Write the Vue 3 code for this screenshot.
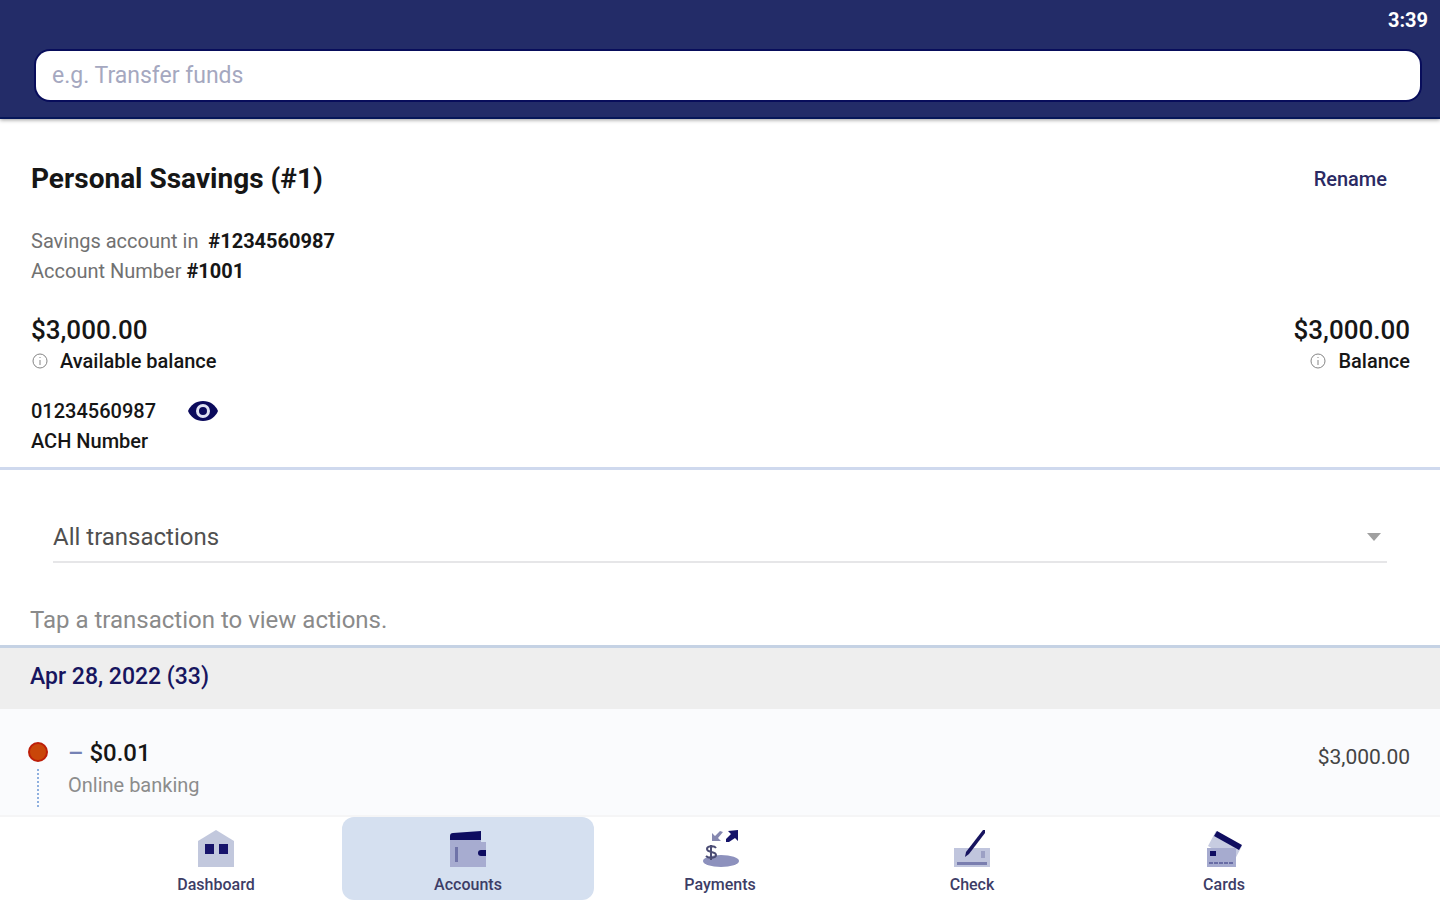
<script setup>
import { ref } from 'vue';

const search = ref('');
const filter = ref('all');
const activeTab = ref('accounts');
const achVisible = ref(true);

const tabs = [
  { id: 'dashboard', label: 'Dashboard' },
  { id: 'accounts', label: 'Accounts' },
  { id: 'payments', label: 'Payments' },
  { id: 'check', label: 'Check' },
  { id: 'cards', label: 'Cards' },
];

const transactions = [
  { id: 1, amount: '$0.01', description: 'Online banking', balance: '$3,000.00' },
];
</script>

<template>
  <div class="app">
    <header class="top-bar">
      <time class="clock">3:39</time>
      <input
        v-model="search"
        class="search"
        type="text"
        aria-label="Search"
        placeholder="e.g. Transfer funds"
      />
    </header>

    <main class="content">
      <section class="account">
        <div class="row">
          <h1>Personal Ssavings (#1)</h1>
          <button class="rename" type="button">Rename</button>
        </div>
        <div class="meta">
          <p>Savings account in&nbsp; <strong>#1234560987</strong></p>
          <p>Account Number <strong>#1001</strong></p>
        </div>
        <div class="row balances">
          <div>
            <p class="amount">$3,000.00</p>
            <p class="label">
              <svg class="info" viewBox="0 0 18 18" aria-hidden="true">
                <circle cx="9" cy="9" r="7" />
                <path d="M9 8v5M9 5v1" />
              </svg>
              Available balance
            </p>
          </div>
          <div class="right">
            <p class="amount">$3,000.00</p>
            <p class="label">
              <svg class="info" viewBox="0 0 18 18" aria-hidden="true">
                <circle cx="9" cy="9" r="7" />
                <path d="M9 8v5M9 5v1" />
              </svg>
              Balance
            </p>
          </div>
        </div>
        <div class="ach">
          <div class="ach-number">
            <span>{{ achVisible ? '01234560987' : '•••••••••••' }}</span>
            <button
              class="eye"
              type="button"
              aria-label="Toggle ACH number"
              @click="achVisible = !achVisible"
            >
              <svg viewBox="0 0 32 24" aria-hidden="true">
                <path
                  d="M16 2C9 2 3.5 6 1 12c2.5 6 8 10 15 10s12.5-4 15-10C28.500 6 23 2 16 2z"
                  fill="#0b0a5c"
                />
                <circle cx="16" cy="12" r="5.5" fill="#0b0a5c" stroke="#dfe1f2" stroke-width="3" />
              </svg>
            </button>
          </div>
          <p class="label">ACH Number</p>
        </div>
      </section>

      <section class="filter">
        <div class="select-box">
          <select v-model="filter" aria-label="Transaction filter">
            <option value="all">All transactions</option>
          </select>
          <svg class="arrow" viewBox="0 0 14 8" aria-hidden="true">
            <path d="M0 0h14L7 8z" />
          </svg>
        </div>
        <p class="hint">Tap a transaction to view actions.</p>
      </section>

      <h2 class="date">Apr 28, 2022 (33)</h2>
      <ul class="transactions">
        <li v-for="item in transactions" :key="item.id">
          <button class="transaction" type="button">
            <span class="marker">
              <span class="dot"></span>
              <span class="trail"></span>
            </span>
            <span class="details">
              <span class="value"><span class="minus">–</span> {{ item.amount }}</span>
              <span class="description">{{ item.description }}</span>
            </span>
            <span class="running">{{ item.balance }}</span>
          </button>
        </li>
      </ul>
    </main>

    <nav class="tabs">
      <button
        v-for="tab in tabs"
        :key="tab.id"
        class="tab"
        :class="{ active: tab.id === activeTab }"
        type="button"
        @click="activeTab = tab.id"
      >
        <svg v-if="tab.id === 'dashboard'" viewBox="0 0 40 40" aria-hidden="true">
          <path d="M20 1 38 12v26H2V12z" fill="#c2c8dd" />
          <path d="M9 15h9v10H9zM23 15h9v10h-9z" fill="#17146b" />
        </svg>
        <svg v-else-if="tab.id === 'accounts'" viewBox="0 0 40 40" aria-hidden="true">
          <path d="M2 11h31v2h5v25H2z" fill="#a7acd0" />
          <path d="M2 7c0-2 1-3 3-3l28-2v9H2z" fill="#0d0c60" />
          <path d="M7 18h3v15H7z" fill="#6f73a8" />
          <path d="M33 21h5v6h-5a3 3 0 0 1 0-6z" fill="#0d0c60" />
        </svg>
        <svg v-else-if="tab.id === 'payments'" viewBox="0 0 40 40" aria-hidden="true">
          <ellipse cx="21" cy="32" rx="18" ry="6" fill="#8d91bd" />
          <path
            d="M16 19c-2-3-9-2-9 1 0 4 9 2 9 6 0 3-7 4-10 1M11 16v15"
            fill="none"
            stroke="#4b4c74"
            stroke-width="2"
          />
          <path d="M12 4v8h9l-3-3 5-6-3-1-5 5z" fill="#8688b0" />
          <path d="M38 1v11l-3-3-6 4h-3v-3l5-5-3-3z" fill="#15136a" />
        </svg>
        <svg v-else-if="tab.id === 'check'" viewBox="0 0 40 40" aria-hidden="true">
          <path d="M2 19h36v19H2z" fill="#c0c5dd" />
          <path d="M5 33h30v3H5z" fill="#7a7eaf" />
          <path d="M29 22h4v7h-4z" fill="#9ca0c4" />
          <path d="M31 1h2v3L17 25l-4 3 1-5z" fill="#17145f" />
        </svg>
        <svg v-else viewBox="0 0 40 40" aria-hidden="true">
          <path d="M12 2 38 17 30 32 4 17z" fill="#c7cce1" />
          <path d="m13 2 25 14-3 5L10 7z" fill="#0f0d60" />
          <path d="M3 19h29v19H3z" fill="#a6abcf" />
          <path d="M6 22h6v5H6z" fill="#0f0d60" />
          <path d="M5 34h25" stroke="#696da5" stroke-width="2" stroke-dasharray="4 1" />
        </svg>
        <span>{{ tab.label }}</span>
      </button>
    </nav>
  </div>
</template>

<style>
body {
  margin: 0;
}
</style>

<style scoped>
.app {
  display: flex;
  flex-direction: column;
  height: 100vh;
  font-family: Roboto, 'Liberation Sans', sans-serif;
  font-size: 20px;
  line-height: 30px;
  color: #161616;
  background: #fff;
}

h1,
h2,
p,
ul {
  margin: 0;
  padding: 0;
  list-style: none;
}

button,
input,
select {
  font: inherit;
  color: inherit;
  background: none;
  border: 0;
  padding: 0;
}

button {
  cursor: pointer;
}

svg {
  display: block;
  flex-shrink: 0;
}

.top-bar {
  position: relative;
  z-index: 1;
  display: flex;
  flex-direction: column;
  gap: 19px;
  padding: 8px 20px 17px 36px;
  background: #232c68;
  border-bottom: 2px solid #061759;
  box-shadow: 0 1px 4px rgba(0, 0, 0, 0.4);
}

.clock {
  align-self: flex-end;
  margin-right: -8px;
  line-height: 24px;
  font-weight: 700;
  color: #fff;
}

.search {
  height: 49px;
  padding: 0 16px;
  border-radius: 14px;
  background: #fff;
  font-size: 23px;
  box-shadow: 0 0 0 2px #080d5b;
}

.search::placeholder {
  color: #a5a8c0;
  opacity: 1;
}

.content {
  flex: 1;
  display: flex;
  flex-direction: column;
  min-height: 0;
  overflow: hidden auto;
}

.account {
  padding: 44px 30px 11px 31px;
  border-bottom: 3px solid #cfd9ee;
}

.row {
  display: flex;
  justify-content: space-between;
  align-items: center;
}

h1 {
  font-size: 28px;
  line-height: 32px;
  font-weight: 700;
}

.rename {
  margin-right: 23px;
  font-weight: 500;
  color: #2b2a63;
}

.meta {
  margin: 31px 0 28px;
  color: #717171;
}

.meta strong {
  font-weight: 700;
  color: #161616;
}

.amount {
  font-size: 26px;
  line-height: 32px;
  font-weight: 500;
}

.label {
  display: flex;
  align-items: center;
  gap: 11px;
  font-weight: 500;
}

.info {
  width: 18px;
  height: 18px;
  fill: none;
  stroke: #858585;
  stroke-width: 1;
}

.right .label {
  justify-content: flex-end;
}

.ach {
  margin-top: 20px;
}

.ach-number {
  display: flex;
  align-items: center;
  gap: 31px;
  font-weight: 500;
}

.eye svg {
  width: 32px;
  height: 24px;
}

.filter {
  padding: 43px 30px 9px;
  border-bottom: 3px solid #c5d2e4;
}

.select-box {
  display: flex;
  align-items: center;
  margin: 0 23px;
  border-bottom: 2px solid #e6e6e8;
}

.select-box select {
  flex: 1;
  height: 48px;
  margin-right: -20px;
  appearance: none;
  font-size: 24px;
  color: #505050;
}

.arrow {
  width: 14px;
  height: 8px;
  margin-right: 6px;
  fill: #a0a0a0;
  pointer-events: none;
}

.hint {
  margin-top: 41px;
  font-size: 24px;
  line-height: 32px;
  color: #8a8a8a;
}

.date {
  padding: 14px 30px 17px;
  background: #eee;
  font-size: 23px;
  line-height: 30px;
  font-weight: 500;
  color: #17155f;
}

.transactions {
  flex: 1;
  background: #fafbfd;
}

.transaction {
  display: flex;
  align-items: flex-start;
  width: 100%;
  padding: 28px 30px 6px 28px;
  text-align: left;
}

.marker {
  display: flex;
  flex-direction: column;
  align-items: center;
  align-self: stretch;
  gap: 7px;
  width: 20px;
  padding-top: 5px;
}

.dot {
  width: 16px;
  height: 16px;
  border: 2px solid #bd1e08;
  border-radius: 50%;
  background: #c94609;
}

.trail {
  flex: 1;
  border-left: 2px dotted #8fb0df;
}

.details {
  display: flex;
  flex: 1;
  flex-direction: column;
  margin-left: 20px;
  padding-bottom: 6px;
  line-height: 32px;
}

.value {
  font-size: 24px;
  font-weight: 500;
}

.minus {
  color: #7582b5;
}

.description {
  color: #8c8c8c;
}

.running {
  padding-top: 5px;
  font-size: 21px;
  color: #444;
}

.tabs {
  display: flex;
  justify-content: center;
  padding: 0 6%;
  border-top: 2px solid #f5f5f6;
}

.tab {
  flex: 0 1 252px;
  display: flex;
  flex-direction: column;
  align-items: center;
  gap: 4px;
  height: 83px;
  padding-top: 12px;
  border-radius: 12px;
  font-size: 16px;
  line-height: 24px;
  font-weight: 500;
  color: #3d3d66;
}

.tab.active {
  background: #d5e0f0;
}

.tab svg {
  width: 40px;
  height: 40px;
}
</style>
